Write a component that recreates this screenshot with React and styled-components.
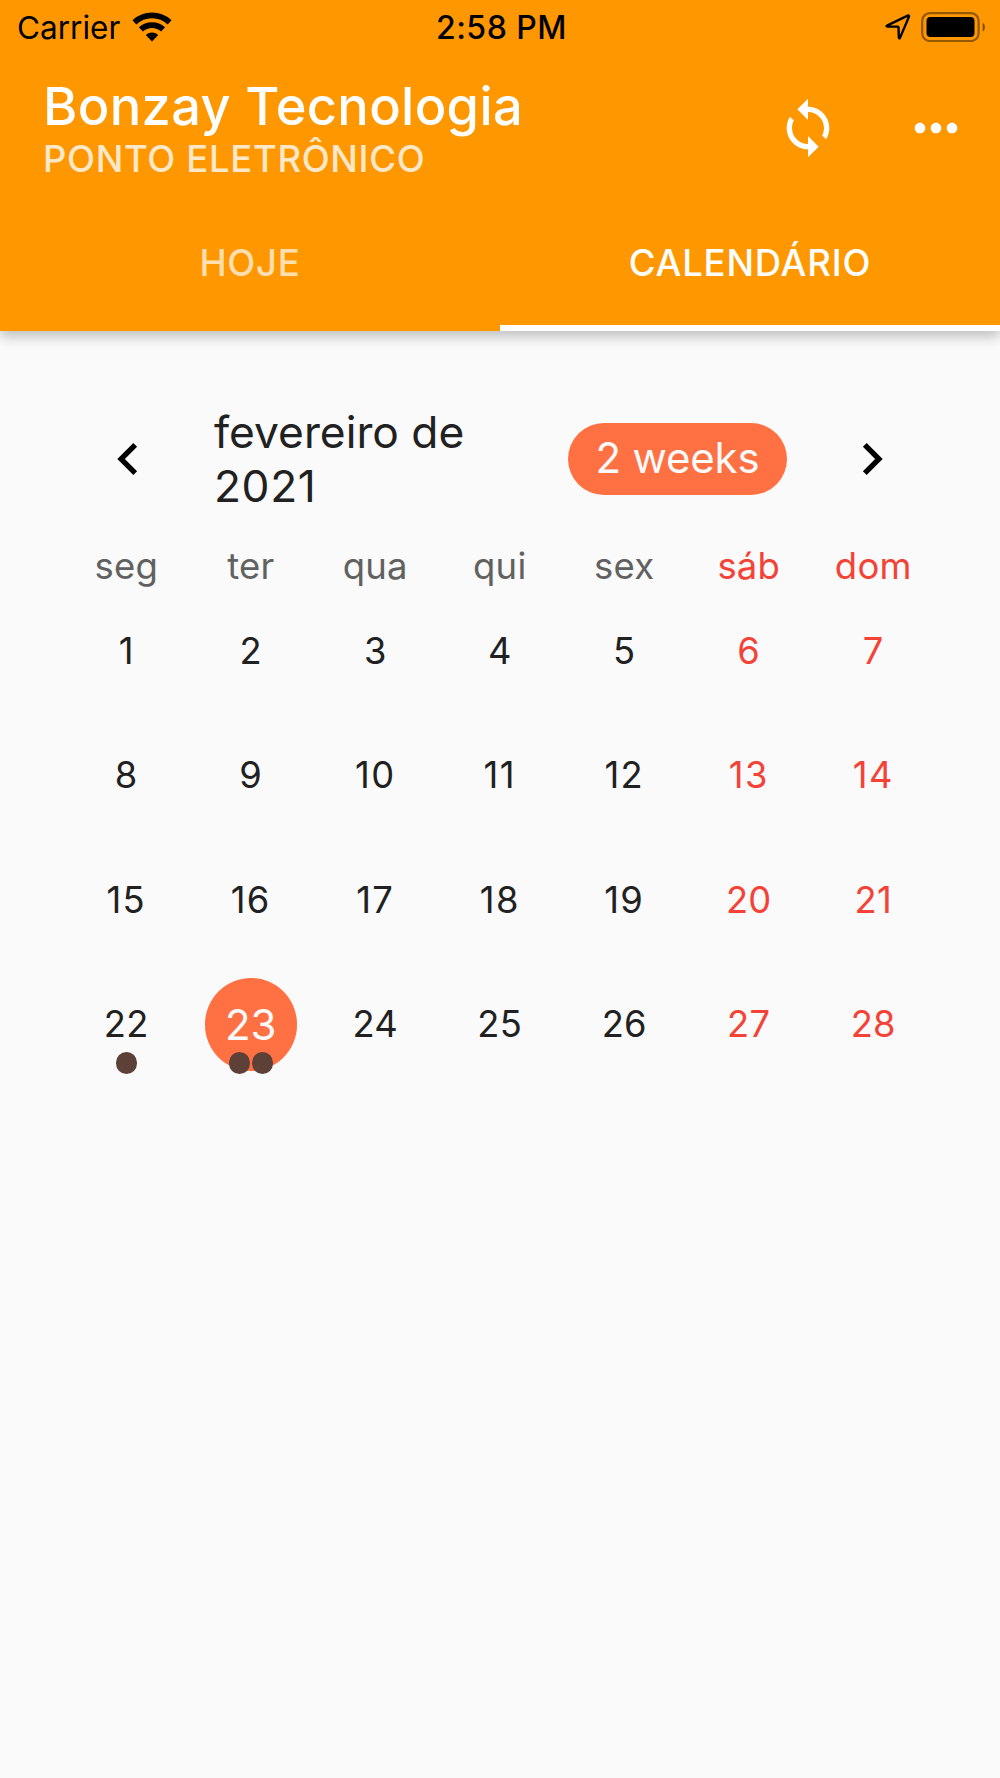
import React from "react";
import styled, { createGlobalStyle } from "styled-components";

const GlobalStyle = createGlobalStyle`
  *, *::before, *::after { box-sizing: border-box; }
  body {
    margin: 0;
    background: #fafafa;
    font-family: Inter, "Liberation Sans", sans-serif;
  }
`;

const Screen = styled.div`
  width: 1000px;
  height: 1778px;
  overflow: hidden;
  background: #fafafa;
`;

const Header = styled.header`
  display: flex;
  flex-direction: column;
  height: 331px;
  background: #ff9800;
  box-shadow: 0 5px 11px rgba(0, 0, 0, 0.13), 0 8px 13px rgba(0, 0, 0, 0.07),
    0 3px 16px rgba(0, 0, 0, 0.06);
`;

const StatusBar = styled.div`
  display: grid;
  grid-template-columns: 1fr auto 1fr;
  align-items: center;
  height: 53px;
  padding: 0 14px 0 17px;
  color: #000;
`;

const StatusGroup = styled.div`
  display: flex;
  align-items: center;
  justify-content: ${(p) => (p.$end ? "flex-end" : "flex-start")};
  gap: ${(p) => p.$gap}px;
`;

const Label = styled.span`
  display: block;
  white-space: nowrap;
  font-size: ${(p) => p.$size}px;
  line-height: ${(p) => p.$line || p.$size}px;
  font-weight: ${(p) => p.$weight || 400};
  letter-spacing: ${(p) => p.$track || 0}px;
  color: ${(p) => p.$color || "inherit"};
  padding-top: ${(p) => p.$drop || 0}px;
`;

const Toolbar = styled.div`
  display: flex;
  align-items: center;
  height: 150px;
  padding: 0 0 0 43px;
`;

const Titles = styled.div`
  flex: 1;
`;

const IconButton = styled.button`
  display: flex;
  align-items: center;
  justify-content: center;
  width: 128px;
  height: 128px;
  padding: 0;
  border: 0;
  background: none;
  color: ${(p) => p.$color || "#fff"};
`;

const Tabs = styled.nav`
  display: grid;
  grid-template-columns: 1fr 1fr;
  flex: 1;
`;

const Tab = styled.div`
  display: flex;
  align-items: center;
  justify-content: center;
  padding-bottom: ${(p) => (p.$active ? 2 : 8)}px;
  border-bottom: ${(p) => (p.$active ? "6px solid #fff" : "0")};
  color: ${(p) => (p.$active ? "#fff" : "rgba(255, 255, 255, 0.7)")};
`;

const Calendar = styled.main`
  padding: 64px 64px 0;
`;

const CalendarHeader = styled.div`
  display: flex;
  align-items: center;
  height: 127px;
`;

const Month = styled.h2`
  flex: 1;
  margin: 1px 0 0 22px;
  padding-right: 90px;
  font-size: 44.3px;
  line-height: 54px;
  font-weight: 400;
  letter-spacing: 0;
  color: #212121;
`;

const Year = styled.span`
  letter-spacing: 0.6px;
`;

const FormatPill = styled.div`
  display: flex;
  align-items: center;
  justify-content: center;
  width: 219px;
  height: 72px;
  margin-right: 21px;
  padding-bottom: 2px;
  border-radius: 36px;
  background: #ff7043;
  color: #fafafa;
`;

const Grid = styled.div`
  display: grid;
  grid-template-columns: repeat(7, 124.5px);
  grid-template-rows: 67px repeat(4, 124.4px);
`;

const Cell = styled.div`
  position: relative;
  display: flex;
  align-items: center;
  justify-content: center;
  color: ${(p) => (p.$weekend ? "#f44336" : p.$heading ? "#616161" : "#212121")};
`;

const Selected = styled.div`
  display: flex;
  align-items: center;
  justify-content: center;
  width: 92.5px;
  height: 92.5px;
  border-radius: 50%;
  background: #ff7043;
  color: #fafafa;
`;

const Markers = styled.div`
  position: absolute;
  left: 0;
  right: 0;
  bottom: 13px;
  display: flex;
  justify-content: center;
  gap: 1.6px;
`;

const Dot = styled.span`
  width: 21.3px;
  height: 21.3px;
  border-radius: 50%;
  background: #5d4037;
`;

const MaterialIcon = ({ d }) => (
  <svg width="64" height="64" viewBox="0 0 24 24" fill="currentColor">
    <path d={d} />
  </svg>
);

const ICONS = {
  sync: "M12 4V1L8 5l4 4V6c3.31 0 6 2.69 6 6 0 1.01-.25 1.97-.7 2.8l1.46 1.46C19.54 15.03 20 13.57 20 12c0-4.42-3.58-8-8-8zm0 14c-3.31 0-6-2.69-6-6 0-1.01.25-1.97.7-2.8L5.24 7.74C4.46 8.97 4 10.43 4 12c0 4.42 3.58 8 8 8v3l4-4-4-4v3z",
  more: "M6 10c-1.1 0-2 .9-2 2s.9 2 2 2 2-.9 2-2-.9-2-2-2zm12 0c-1.1 0-2 .9-2 2s.9 2 2 2 2-.9 2-2-.9-2-2-2zm-6 0c-1.1 0-2 .9-2 2s.9 2 2 2 2-.9 2-2-.9-2-2-2z",
  left: "M15.41 7.41L14 6l-6 6 6 6 1.41-1.41L10.83 12z",
  right: "M10 6L8.59 7.41 13.17 12l-4.58 4.59L10 18l6-6z",
};

const WifiIcon = () => (
  <svg width="40" height="30" viewBox="0 0 40 30">
    <g fill="none" stroke="#000" strokeWidth="5.8">
      <path d="M2.4 10.3a26 26 0 0 1 35.2 0" />
      <path d="M8.9 17.4a16.4 16.4 0 0 1 22.2 0" />
    </g>
    <path d="M13.8 22.9a9.2 9.2 0 0 1 12.4 0L20 29.5z" />
  </svg>
);

const LocationIcon = () => (
  <svg width="26" height="27" viewBox="0 0 26 27">
    <path
      d="M2 12.7 22.7 2.7Q24.5 2.1 23.8 4.1L15 24.9Q14 26.1 13.8 24.1L13.5 14.2Q13.4 13.6 12.7 13.6L2.4 13.5Q1 13.2 2 12.7Z"
      fill="none"
      stroke="#000"
      strokeWidth="2.4"
      strokeLinejoin="round"
    />
  </svg>
);

const BatteryIcon = () => (
  <svg width="65" height="30" viewBox="0 0 65 30">
    <rect x="1.2" y="1.2" width="56.4" height="27.8" rx="7.5" fill="none" stroke="#000" strokeOpacity="0.42" strokeWidth="2.2" />
    <rect x="5.5" y="5" width="48" height="20" rx="4" />
    <path d="M61.7 10.4Q64 12 64 15T61.7 19.8Z" fillOpacity="0.5" />
  </svg>
);

const WEEKDAYS = ["seg", "ter", "qua", "qui", "sex", "sáb", "dom"];
const DAYS = Array.from({ length: 28 }, (_, i) => i + 1);
const EVENTS = { 22: 1, 23: 2 };
const SELECTED_DAY = 23;

export default function App() {
  return (
    <>
      <GlobalStyle />
      <Screen>
        <Header>
          <StatusBar>
            <StatusGroup $gap={12}>
              <Label $size={31.5} $drop={2}>Carrier</Label>
              <WifiIcon />
            </StatusGroup>
            <Label $size={32} $weight={500} $track={0.5} $drop={2}>2:58 PM</Label>
            <StatusGroup $end $gap={10}>
              <LocationIcon />
              <BatteryIcon />
            </StatusGroup>
          </StatusBar>
          <Toolbar>
            <Titles>
              <Label $size={52.3} $line={62} $weight={500} $track={0.38} $color="#fff">Bonzay Tecnologia</Label>
              <Label $size={36.5} $line={44} $weight={500} $track={0.65} $color="rgba(255, 255, 255, 0.8)">PONTO ELETRÔNICO</Label>
            </Titles>
            <IconButton aria-label="Sincronizar"><MaterialIcon d={ICONS.sync} /></IconButton>
            <IconButton aria-label="Mais"><MaterialIcon d={ICONS.more} /></IconButton>
          </Toolbar>
          <Tabs>
            <Tab><Label $size={36.5} $weight={500} $track={0.75}>HOJE</Label></Tab>
            <Tab $active><Label $size={36.5} $weight={500} $track={0.8}>CALENDÁRIO</Label></Tab>
          </Tabs>
        </Header>
        <Calendar>
          <CalendarHeader>
            <IconButton $color="#000" aria-label="Mês anterior"><MaterialIcon d={ICONS.left} /></IconButton>
            <Month>fevereiro de <Year>2021</Year></Month>
            <FormatPill><Label $size={42} $track={-0.2}>2 weeks</Label></FormatPill>
            <IconButton $color="#000" aria-label="Próximo mês"><MaterialIcon d={ICONS.right} /></IconButton>
          </CalendarHeader>
          <Grid>
            {WEEKDAYS.map((name, i) => (
              <Cell key={name} $heading $weekend={i > 4}>
                <Label $size={36.5} $track={0.2} $drop={21}>{name}</Label>
              </Cell>
            ))}
            {DAYS.map((day) => (
              <Cell key={day} $weekend={(day - 1) % 7 > 4}>
                {day === SELECTED_DAY ? (
                  <Selected><Label $size={42} $drop={1}>{day}</Label></Selected>
                ) : (
                  <Label $size={36.3} $track={day > 9 && day < 20 ? 1.4 : 0.3}>{day}</Label>
                )}
                {EVENTS[day] && (
                  <Markers>
                    {Array.from({ length: EVENTS[day] }, (_, i) => <Dot key={i} />)}
                  </Markers>
                )}
              </Cell>
            ))}
          </Grid>
        </Calendar>
      </Screen>
    </>
  );
}
